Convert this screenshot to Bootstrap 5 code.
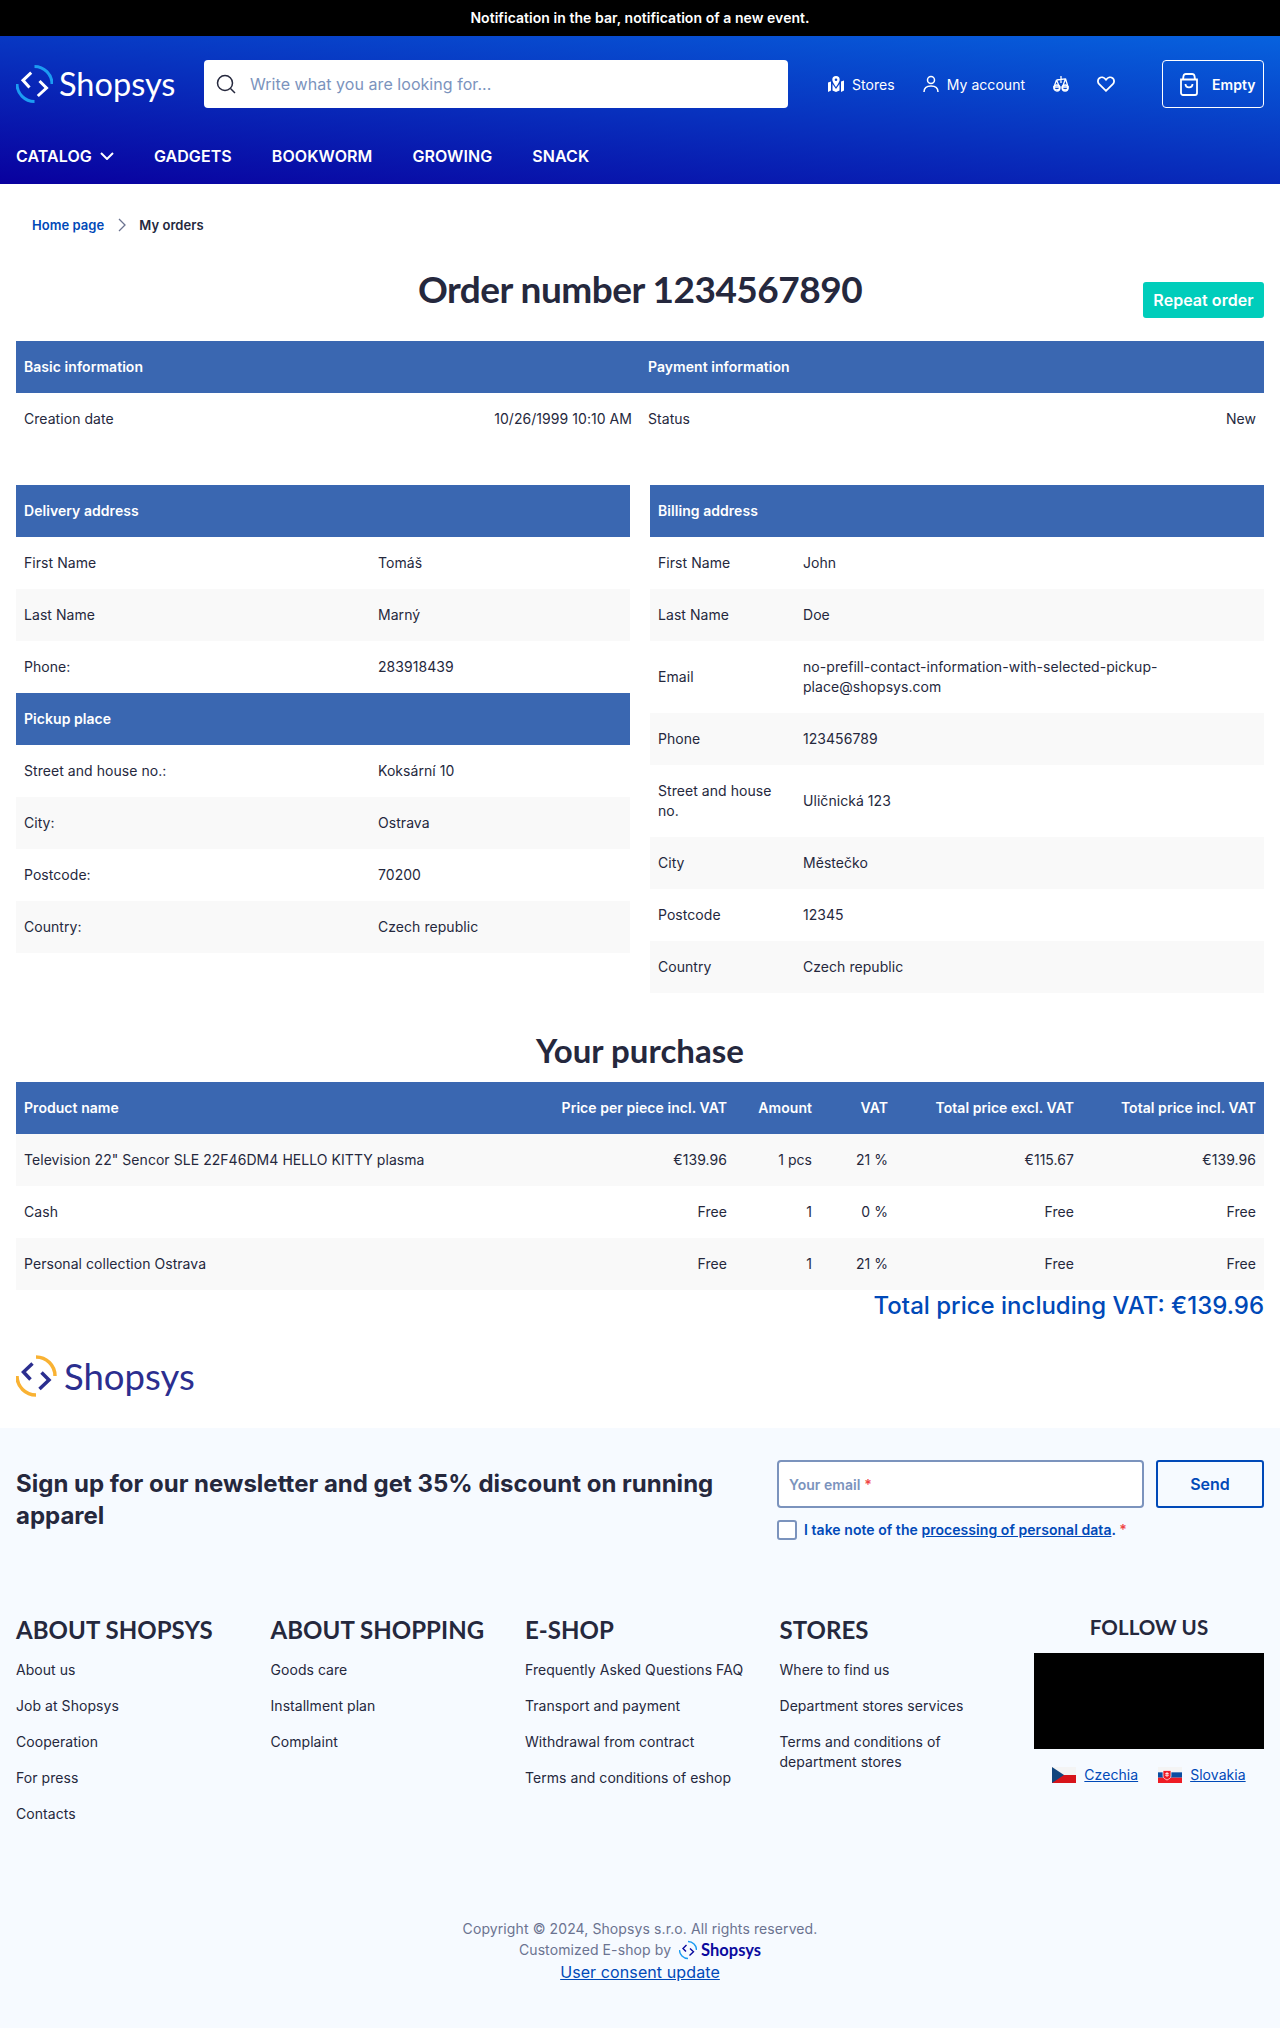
<!DOCTYPE html>
<html lang="en">
<head>
  <meta charset="UTF-8">
  <meta name="viewport" content="width=device-width, initial-scale=1.0">
  <title>Order number 1234567890</title>
  <link href="https://cdn.jsdelivr.net/npm/bootstrap@5.3.3/dist/css/bootstrap.min.css" rel="stylesheet">
  <script src="https://cdn.jsdelivr.net/npm/bootstrap@5.3.3/dist/js/bootstrap.bundle.min.js"></script>
  <style>
    body {
      font-family: Inter, "Liberation Sans", sans-serif;
      font-size: 14px;
      letter-spacing: .05px;
      color: #25283d;
    }
    a { color: #0049b8; }
    .notice-bar {
      background: #000;
      height: 36px;
      padding-bottom: 1px;
      font-size: 14px;
      font-weight: 600;
    }
    .shop-head {
      background: linear-gradient(5deg, #09009e, #0762de);
      height: 148px;
      padding: 24px 16px 0;
    }
    .logo-word {
      font-family: Lato, sans-serif;
      font-size: 32.5px;
      line-height: 40px;
      letter-spacing: 0;
    }
    .shop-logo { width: 160px; gap: 6px; margin-right: 28px; }
    .shop-logo svg, .foot-logo svg, .copy-block svg { flex-shrink: 0; }
    .search-box {
      width: 584px;
      height: 48px;
      background: #fff;
      border-radius: 4px;
      padding: 0 12px;
      gap: 14px;
      color: #7b93bd;
      font-size: 16px;
    }
    .head-links { font-size: 14px; margin-left: 40px; gap: 28px; }
    .head-link { color: #fff; text-decoration: none; gap: 8px; }
    .cart-box {
      width: 102px;
      height: 48px;
      border: 1px solid #fff;
      border-radius: 4px;
      color: #fff;
      font-weight: 600;
      gap: 14px;
      padding-left: 17px;
      margin-left: auto;
    }
    .main-menu { margin-top: 24px; gap: 40px; }
    .main-menu a {
      color: #fff;
      font-size: 16px;
      font-weight: 600;
      letter-spacing: .08px;
      text-decoration: none;
      line-height: 48px;
    }
    .crumbs { padding: 32px 32px 0; height: 57px; font-size: 13px; font-weight: 600; }
    .crumbs a { text-decoration: none; }
    .crumb-arrow { margin: 1px 13px 0 14px; }
    .page-body { padding: 0 16px; }
    .page-title {
      font-family: Lato, sans-serif;
      font-size: 37px;
      font-weight: 700;
      line-height: 48px;
      letter-spacing: -0.5px;
      margin: 0;
      text-align: center;
    }
    .title-row { height: 100px; padding-top: 24px; }
    .btn-repeat {
      background: #00cdbb;
      color: #fff;
      font-size: 16px;
      font-weight: 600;
      border-radius: 3px;
      height: 36px;
      width: 121px;
      padding: 0;
      top: 41px;
      right: 0;
    }
    .info-tbl { margin: 0; width: 100%; border-collapse: collapse; }
    .info-tbl th, .info-tbl td {
      padding: 16px 8px;
      line-height: 20px;
      font-size: 14px;
      vertical-align: middle;
      border: 0;
    }
    .info-tbl th { background: #3a67b1; color: #fff; font-weight: 600; }
    .info-tbl tr.alt td { background: #f9f9f9; }
    .fixed-tbl { table-layout: fixed; }
    .deliv-label { width: 354px; }
    .bill-label { width: 145px; }
    .buy-tbl th:nth-child(1) { width: 525px; }
    .buy-tbl th:nth-child(2) { width: 194px; }
    .buy-tbl th:nth-child(3) { width: 85px; }
    .buy-tbl th:nth-child(4) { width: 76px; }
    .buy-tbl th:nth-child(5) { width: 186px; }
    .buy-tbl th:nth-child(6) { width: 182px; }
    .addr-grid { margin-top: 40px; gap: 20px; }
    .addr-grid > div { width: 614px; }
    .buy-title {
      font-family: Lato, sans-serif;
      font-size: 33px;
      font-weight: 700;
      line-height: 40px;
      text-align: center;
      margin: 37px 0 12px;
    }
    .sum-line { color: #0049b8; font-size: 24px; font-weight: 500; line-height: 32px; letter-spacing: 0; }
    .foot-logo { height: 106px; padding-top: 31px; gap: 7px; }
    .foot-logo .logo-word { color: #2b2e8f; font-size: 36.5px; line-height: 46px; }
    .site-foot { background: #f6faff; height: 600px; padding: 0 16px; }
    .news-row { padding-top: 32px; height: 186px; }
    .news-head { width: 761px; font-size: 24px; font-weight: 700; line-height: 32px; letter-spacing: 0; padding: 8px 30px 0 0; margin: 0; }
    .news-form { width: 487px; }
    .send-row { column-gap: 12px; }
    .mail-box {
      width: 367px;
      height: 48px;
      background: #fff;
      border: 2px solid #7b93bd;
      border-radius: 4px;
      padding: 0 10px;
      color: #7b93bd;
      font-weight: 600;
    }
    .req { color: #ef4444; }
    .btn-send {
      width: 108px;
      height: 48px;
      border: 2px solid #0049b8;
      border-radius: 3px;
      color: #0049b8;
      font-size: 16px;
      font-weight: 600;
      padding: 0;
    }
    .btn-send:hover { color: #0049b8; border-color: #0049b8; }
    .tick-box {
      width: 20px;
      height: 20px;
      border: 2px solid #7b93bd;
      border-radius: 3px;
      background: #fff;
    }
    .tick-line { margin-top: 11px; gap: 7px; color: #0049b8; font-weight: 600; font-size: 14px; }
    .foot-cols { height: 304px; }
    .foot-col { width: 254.5px; }
    .foot-col h4 {
      font-family: Lato, sans-serif;
      font-size: 24px;
      font-weight: 700;
      line-height: 32px;
      text-transform: uppercase;
      margin: 0 0 6px;
    }
    .foot-col a {
      display: block;
      color: #25283d;
      text-decoration: none;
      line-height: 20px;
      padding: 8px 0;
      width: 225px;
    }
    .follow-col { width: 230px; text-align: center; }
    .follow-col h5 {
      font-family: Lato, sans-serif;
      font-size: 20.5px;
      font-weight: 700;
      line-height: 26px;
      text-transform: uppercase;
      margin: 0 0 13px;
    }
    .follow-black { background: #000; height: 96px; }
    .flag-links { margin-top: 15px; gap: 20px; }
    .flag-links a { margin-left: 8px; }
    .copy-block { color: #6b7390; line-height: 21px; text-align: center; letter-spacing: .1px; }
    .copy-block .logo-word { font-size: 16.5px; line-height: 20px; font-weight: 700; color: #0a0a9e; }
    .copy-block a { font-size: 16px; line-height: 24px; }
  </style>
</head>
<body>
  <div class="notice-bar d-flex align-items-center justify-content-center text-white">Notification in the bar, notification of a new event.</div>

  <header class="shop-head">
    <div class="d-flex align-items-center">
      <div class="shop-logo d-flex align-items-center text-white">
        <svg width="37" height="42" viewBox="-18.5 -21 37 42" fill="none" stroke-width="3">
          <path d="M0 -17.500A17.500 17.500 0 0 1 17.500 0M-17.500 0A17.500 17.500 0 0 0 0 17.500" stroke="#1c9cf2"/>
          <path d="M-3.300 -11.300L-11.500 -3.700L-5 3.500M5 -3L12 4L3.300 12" stroke="#fff"/>
        </svg>
        <span class="logo-word">Shopsys</span>
      </div>
      <div class="search-box d-flex align-items-center">
        <svg width="20" height="20" viewBox="0 0 20 20" fill="none" stroke="#25283d" stroke-width="1.500"><circle cx="9" cy="9" r="7.500"/><path d="M14.500 14.500L19 19"/></svg>
        <span>Write what you are looking for...</span>
      </div>
      <div class="head-links d-flex align-items-center">
        <a class="head-link d-flex align-items-center" href="#">
          <svg width="16" height="16" viewBox="0 0 16 16" fill="#fff"><path d="M0 6.500l3-1v9l-3 1.500zM4.500 8l3.500 5 3.500-5V14.500L8 16l-3.500-1.500zM13 5.500l3-1v10l-3 1.500z"/><path fill-rule="evenodd" d="M8 0a3.700 3.700 0 0 1 3.700 3.700C11.700 6 8 11 8 11S4.300 6 4.300 3.700A3.700 3.700 0 0 1 8 0zm0 2.400a1.300 1.300 0 1 0 0 2.600 1.300 1.300 0 0 0 0-2.600z"/></svg>
          Stores
        </a>
        <a class="head-link d-flex align-items-center" href="#">
          <svg width="16" height="18" viewBox="0 0 16 18" fill="none" stroke="#fff" stroke-width="1.500"><circle cx="8" cy="5" r="3.500"/><path d="M1 17c0-4 3-6 7-6s7 2 7 6"/></svg>
          My account
        </a>
        <a class="head-link d-flex" href="#">
          <svg width="16" height="16" viewBox="0 0 16 16" fill="none" stroke="#fff" stroke-width="1.300"><path d="M8 0v7M3.500 4l9-1.200M3.500 4L1 11M3.500 4L6.500 11M12.500 2.800L9.500 11M12.500 2.800L15 11"/><path d="M1 11h5.800a2.900 2.900 0 0 1-5.800 0zM9.200 11H15a2.900 2.900 0 0 1-5.800 0z"/><circle cx="3.900" cy="12" r="3"/><circle cx="12.100" cy="12" r="3"/></svg>
        </a>
        <a class="head-link d-flex" href="#">
          <svg width="18" height="16" viewBox="0 0 18 16" fill="none" stroke="#fff" stroke-width="1.800"><path d="M9 14.800L2.200 8.200C.4 6.300.6 3.700 2.300 2.200c1.900-1.500 4.700-1 6.700 1.500 2-2.500 4.800-3 6.700-1.500 1.700 1.500 1.900 4.100.1 6z"/></svg>
        </a>
      </div>
      <div class="cart-box d-flex align-items-center">
        <svg width="18" height="23" viewBox="0 0 18 23" fill="none" stroke="#fff" stroke-width="1.800"><path d="M3 6.500L3.500 3A2.500 2.500 0 0 1 6 1h6a2.500 2.500 0 0 1 2.500 2L15 6.500M1 6.500h16v13.500a2 2 0 0 1-2 2H3a2 2 0 0 1-2-2zM5.500 11c0 4.500 7 4.500 7 0"/></svg>
        Empty
      </div>
    </div>
    <nav class="main-menu d-flex">
      <a href="#" class="d-flex align-items-center">CATALOG
        <svg class="ms-2" width="14" height="8" viewBox="0 0 14 8" fill="none" stroke="#fff" stroke-width="2"><path d="M1 1l6 6 6-6"/></svg>
      </a>
      <a href="#">GADGETS</a>
      <a href="#">BOOKWORM</a>
      <a href="#">GROWING</a>
      <a href="#">SNACK</a>
    </nav>
  </header>

  <div class="crumbs d-flex align-items-start">
    <a href="#">Home page</a>
    <svg class="crumb-arrow" width="8" height="16" viewBox="0 0 8 16" fill="none" stroke="#6b7390" stroke-width="1.300"><path d="M1 2l6 6-6 6"/></svg>
    <span>My orders</span>
  </div>

  <main class="page-body">
    <div class="title-row position-relative">
      <h1 class="page-title">Order number 1234567890</h1>
      <a href="#" class="btn btn-repeat position-absolute d-flex align-items-center justify-content-center">Repeat order</a>
    </div>

    <table class="info-tbl fixed-tbl">
      <tr><th colspan="2">Basic information</th><th colspan="2">Payment information</th></tr>
      <tr>
        <td>Creation date</td><td class="text-end">10/26/1999 10:10 AM</td>
        <td>Status</td><td class="text-end">New</td>
      </tr>
    </table>

    <div class="addr-grid d-flex align-items-start">
      <div>
        <table class="info-tbl">
          <tr><th colspan="2">Delivery address</th></tr>
          <tr><td class="deliv-label">First Name</td><td>Tomáš</td></tr>
          <tr class="alt"><td>Last Name</td><td>Marný</td></tr>
          <tr><td>Phone:</td><td>283918439</td></tr>
          <tr><th colspan="2">Pickup place</th></tr>
          <tr><td>Street and house no.:</td><td>Koksární 10</td></tr>
          <tr class="alt"><td>City:</td><td>Ostrava</td></tr>
          <tr><td>Postcode:</td><td>70200</td></tr>
          <tr class="alt"><td>Country:</td><td>Czech republic</td></tr>
        </table>
      </div>
      <div>
        <table class="info-tbl">
          <tr><th colspan="2">Billing address</th></tr>
          <tr><td class="bill-label">First Name</td><td>John</td></tr>
          <tr class="alt"><td>Last Name</td><td>Doe</td></tr>
          <tr><td>Email</td><td>no-prefill-contact-information-with-selected-pickup-place@shopsys.com</td></tr>
          <tr class="alt"><td>Phone</td><td>123456789</td></tr>
          <tr><td>Street and house no.</td><td>Uličnická 123</td></tr>
          <tr class="alt"><td>City</td><td>Městečko</td></tr>
          <tr><td>Postcode</td><td>12345</td></tr>
          <tr class="alt"><td>Country</td><td>Czech republic</td></tr>
        </table>
      </div>
    </div>

    <h2 class="buy-title">Your purchase</h2>
    <table class="info-tbl fixed-tbl buy-tbl">
      <tr>
        <th>Product name</th>
        <th class="text-end">Price per piece incl. VAT</th>
        <th class="text-end">Amount</th>
        <th class="text-end">VAT</th>
        <th class="text-end">Total price excl. VAT</th>
        <th class="text-end">Total price incl. VAT</th>
      </tr>
      <tr class="alt">
        <td>Television 22" Sencor SLE 22F46DM4 HELLO KITTY plasma</td>
        <td class="text-end">€139.96</td><td class="text-end">1 pcs</td><td class="text-end">21 %</td>
        <td class="text-end">€115.67</td><td class="text-end">€139.96</td>
      </tr>
      <tr>
        <td>Cash</td>
        <td class="text-end">Free</td><td class="text-end">1</td><td class="text-end">0 %</td>
        <td class="text-end">Free</td><td class="text-end">Free</td>
      </tr>
      <tr class="alt">
        <td>Personal collection Ostrava</td>
        <td class="text-end">Free</td><td class="text-end">1</td><td class="text-end">21 %</td>
        <td class="text-end">Free</td><td class="text-end">Free</td>
      </tr>
    </table>
    <div class="sum-line text-end">Total price including VAT: €139.96</div>

    <div class="foot-logo d-flex align-items-start">
      <svg width="41" height="46" viewBox="-20 -23 41 46" fill="none" stroke-width="3.500">
        <path d="M0 -19A19 19 0 0 1 19 0M-19 0A19 19 0 0 0 0 19" stroke="#f9b233"/>
        <path d="M-3.500 -12.500L-12.500 -4L-5.500 3.500M5.500 -3.500L13 4L3.500 13" stroke="#2b2e8f"/>
      </svg>
      <span class="logo-word">Shopsys</span>
    </div>
  </main>

  <footer class="site-foot">
    <div class="news-row d-flex">
      <h3 class="news-head">Sign up for our newsletter and get 35% discount on running apparel</h3>
      <div class="news-form">
        <div class="send-row d-flex">
          <div class="mail-box d-flex align-items-center">Your email&nbsp;<span class="req">*</span></div>
          <button type="button" class="btn btn-send">Send</button>
        </div>
        <div class="tick-line d-flex align-items-center">
          <span class="tick-box"></span>
          <span>I take note of the <a href="#">processing of personal data</a>. <span class="req">*</span></span>
        </div>
      </div>
    </div>

    <div class="foot-cols d-flex">
      <div class="foot-col">
        <h4>About Shopsys</h4>
        <a href="#">About us</a><a href="#">Job at Shopsys</a><a href="#">Cooperation</a><a href="#">For press</a><a href="#">Contacts</a>
      </div>
      <div class="foot-col">
        <h4>About shopping</h4>
        <a href="#">Goods care</a><a href="#">Installment plan</a><a href="#">Complaint</a>
      </div>
      <div class="foot-col">
        <h4>E-shop</h4>
        <a href="#">Frequently Asked Questions FAQ</a><a href="#">Transport and payment</a><a href="#">Withdrawal from contract</a><a href="#">Terms and conditions of eshop</a>
      </div>
      <div class="foot-col">
        <h4>Stores</h4>
        <a href="#">Where to find us</a><a href="#">Department stores services</a><a href="#">Terms and conditions of department stores</a>
      </div>
      <div class="follow-col">
        <h5>Follow us</h5>
        <div class="follow-black"></div>
        <div class="flag-links d-flex justify-content-center">
          <div class="d-flex align-items-center">
            <svg width="24" height="16" viewBox="0 0 24 16"><rect width="24" height="8" fill="#f4f4f4"/><rect y="8" width="24" height="8" fill="#d7141a"/><path d="M0 0l12 8-12 8z" fill="#11457e"/></svg>
            <a href="#">Czechia</a>
          </div>
          <div class="d-flex align-items-center">
            <svg width="24" height="16" viewBox="0 0 24 16"><rect width="24" height="5.330" fill="#f4f4f4"/><rect y="5.330" width="24" height="5.340" fill="#0b4ea2"/><rect y="10.670" width="24" height="5.330" fill="#ee1c25"/><path d="M5 3.500h8v5.500c0 2-2 3-4 4-2-1-4-2-4-4z" fill="#ee1c25" stroke="#fff" stroke-width=".7"/><path d="M9 5v5M7.300 6.500h3.400M7 8.200h4" stroke="#fff" stroke-width=".8"/></svg>
            <a href="#">Slovakia</a>
          </div>
        </div>
      </div>
    </div>

    <div class="copy-block">
      <div>Copyright © 2024, Shopsys s.r.o. All rights reserved.</div>
      <div class="d-flex justify-content-center align-items-center">Customized E-shop by
        <svg class="ms-2 me-1" width="18" height="20" viewBox="-9 -10 18 20" fill="none" stroke-width="1.400">
          <path d="M0 -8.500A8.500 8.500 0 0 1 8.500 0M-8.500 0A8.500 8.500 0 0 0 0 8.500" stroke="#1c9cf2"/>
          <path d="M-1.500 -5L-5 -1.500L-2 1.500M2 -1.500L5.500 1.800L1.500 5.500" stroke="#0a0a9e"/>
        </svg>
        <span class="logo-word">Shopsys</span>
      </div>
      <a href="#">User consent update</a>
    </div>
  </footer>
</body>
</html>
